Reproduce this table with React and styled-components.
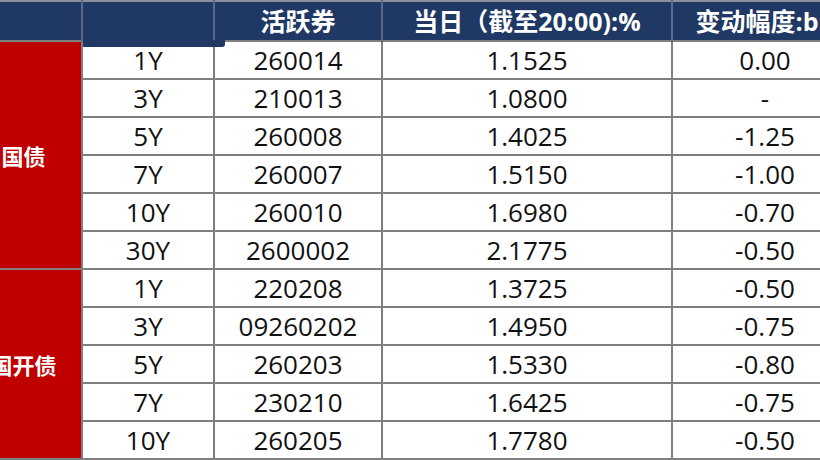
import React from 'react';
import styled, { createGlobalStyle } from 'styled-components';

const GlobalStyle = createGlobalStyle`
  html, body {
    margin: 0;
    padding: 0;
    background: #ffffff;
    overflow: hidden;
  }
  body {
    font-family: "Open Sans", "Noto Sans CJK SC", sans-serif;
  }
`;

const Page = styled.div`
  width: 820px;
  height: 460px;
  overflow: hidden;
`;

const Table = styled.table`
  margin-left: -35px;
  border-collapse: collapse;
  table-layout: fixed;
  width: 892px;
`;

const HeadRow = styled.tr`
  height: 40px;
`;

const HeadCell = styled.th`
  position: relative;
  background-color: #1f3864;
  color: #ffffff;
  font-family: "Open Sans", "Noto Sans CJK SC", sans-serif;
  font-weight: 700;
  font-size: 25px;
  line-height: 1;
  padding: 0;
  text-align: center;
  white-space: nowrap;
  border: 2px solid #5b6b86;
  border-top-color: #8a8f99;
  border-bottom: none;

  /* the navy tab that hangs below the header in the second column */
  ${props => props.overhang && `
    &::after {
      content: '';
      position: absolute;
      left: 0;
      top: 100%;
      width: 142px;
      height: 7px;
      background-color: #1f3864;
      border-bottom-right-radius: 3px;
      z-index: 2;
    }
  `}
`;

const Row = styled.tr`
  height: 38px;
`;

const GroupCell = styled.td`
  background-color: #c00000;
  color: #ffffff;
  font-family: "Noto Sans CJK SC", sans-serif;
  font-weight: 700;
  font-size: 22px;
  text-align: center;
  padding: 0;
  border: 2px solid #7f7f7f;
  border-left: none;
`;

const Cell = styled.td`
  color: #111111;
  font-size: 26px;
  line-height: 1;
  text-align: center;
  padding: 0;
  white-space: nowrap;
  border: 2px solid #7f7f7f;
`;

const groups = [
  {
    name: '国债',
    rows: [
      ['1Y', '260014', '1.1525', '0.00'],
      ['3Y', '210013', '1.0800', '-'],
      ['5Y', '260008', '1.4025', '-1.25'],
      ['7Y', '260007', '1.5150', '-1.00'],
      ['10Y', '260010', '1.6980', '-0.70'],
      ['30Y', '2600002', '2.1775', '-0.50'],
    ],
  },
  {
    name: '国开债',
    rows: [
      ['1Y', '220208', '1.3725', '-0.50'],
      ['3Y', '09260202', '1.4950', '-0.75'],
      ['5Y', '260203', '1.5330', '-0.80'],
      ['7Y', '230210', '1.6425', '-0.75'],
      ['10Y', '260205', '1.7780', '-0.50'],
    ],
  },
];

const App = () => {
  return (
    <Page>
      <GlobalStyle />
      <Table>
        <colgroup>
          <col style={{ width: 116 }} />
          <col style={{ width: 132 }} />
          <col style={{ width: 168 }} />
          <col style={{ width: 290 }} />
          <col style={{ width: 186 }} />
        </colgroup>
        <thead>
          <HeadRow>
            <HeadCell />
            <HeadCell overhang />
            <HeadCell>活跃券</HeadCell>
            <HeadCell>当日（截至20:00):%</HeadCell>
            <HeadCell>变动幅度:bp</HeadCell>
          </HeadRow>
        </thead>
        <tbody>
          {groups.map(group =>
            group.rows.map((row, i) => (
              <Row key={group.name + row[0]}>
                {i === 0 && (
                  <GroupCell rowSpan={group.rows.length}>{group.name}</GroupCell>
                )}
                {row.map((value, j) => (
                  <Cell key={j}>{value}</Cell>
                ))}
              </Row>
            ))
          )}
        </tbody>
      </Table>
    </Page>
  );
};

export default App;
